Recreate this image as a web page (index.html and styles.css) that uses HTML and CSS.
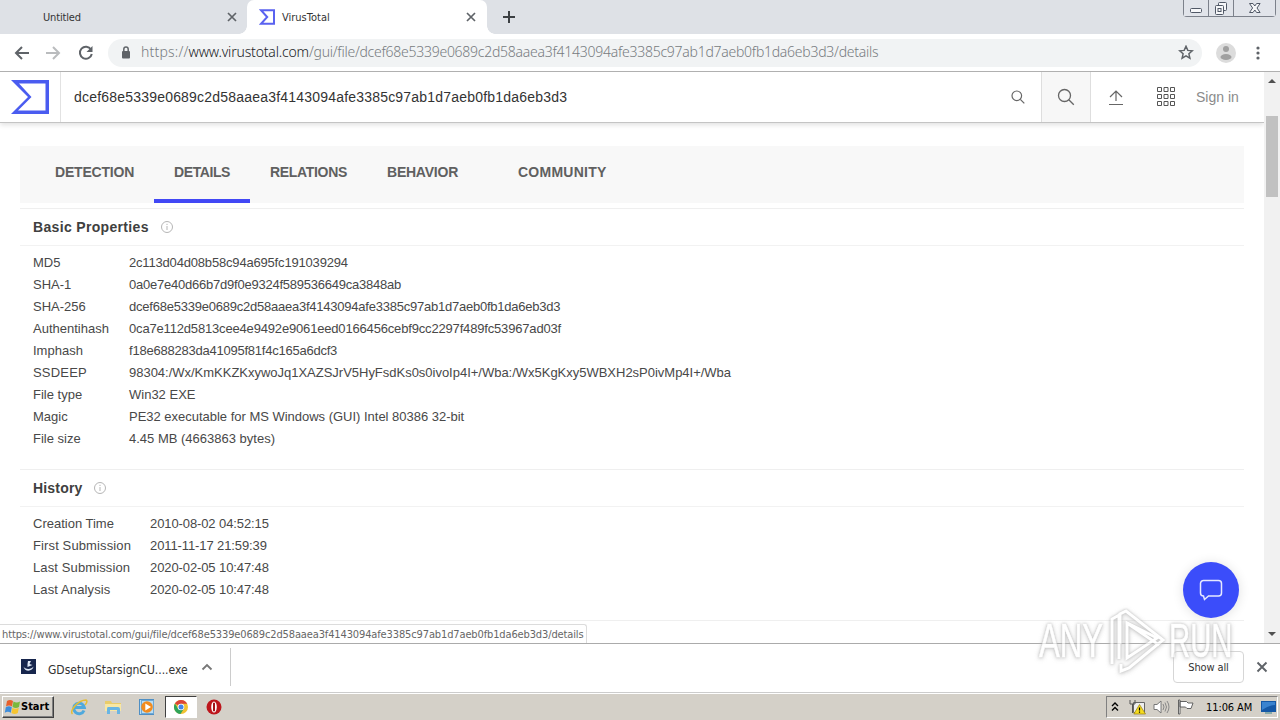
FILE: index.html
```
<!DOCTYPE html>
<html lang="en">
<head>
<meta charset="utf-8">
<title>VirusTotal</title>
<link rel="stylesheet" href="styles.css">
</head>
<body>
<div class="screen">
  <div class="tabstrip">
    <div class="tab tab-idle"><span class="tab-title t-untitled">Untitled</span><svg class="tab-x" width="10" height="10" viewBox="0 0 10 10"><path d="M1 1l8 8M9 1l-8 8"/></svg></div>
    <div class="tab tab-active"><svg class="favicon" width="16" height="16" viewBox="0 0 16 16"><path d="M2 1.200h13v13.600H2L8.200 8z"/></svg><span class="tab-title">VirusTotal</span><svg class="tab-x" width="10" height="10" viewBox="0 0 10 10"><path d="M1 1l8 8M9 1l-8 8"/></svg></div>
    <svg class="newtab" width="12" height="12" viewBox="0 0 12 12"><path d="M6 0v12M0 6h12"/></svg>
    <div class="winbtns">
      <div class="wb"><svg width="24" height="16" viewBox="0 0 24 16"><rect x="6.500" y="8.500" width="11" height="4" rx="1"/></svg></div>
      <div class="wb"><svg width="24" height="16" viewBox="0 0 24 16"><rect x="9.500" y="2.500" width="8" height="8" rx="1"/><rect x="6.500" y="5.500" width="8" height="9" rx="1"/><rect x="9" y="8.500" width="3" height="3"/></svg></div>
      <div class="wb"><svg width="41" height="16" viewBox="0 0 41 16"><path d="M15.500 3.500h3.500l1.800 2.500 1.800-2.500h3.500L23 8l3.100 4.500h-3.500L20.800 10 19 12.500h-3.500L18.600 8z"/></svg></div>
    </div>
  </div>

  <div class="toolbar">
    <svg class="nav" width="94" height="36" viewBox="0 0 94 36"><path class="dark" d="M29 18H16M22 12l-6 6 6 6"/><path class="pale" d="M46 18h13M53 12l6 6-6 6"/><path class="dark" d="M91 14.500a6 6 0 1 0 .8 4.500"/><path class="fill" d="M92.500 11v6h-6z"/></svg>
    <div class="omnibox">
      <svg class="lock" width="10" height="13" viewBox="0 0 10 13"><rect x="1" y="5" width="8" height="7.500" rx="1"/><path d="M2.800 5.500V3.300a2.200 2.200 0 0 1 4.400 0v2.200"/></svg>
      <div class="url"><span class="u1">https://</span><span class="u2">www.virustotal.com</span><span class="u3">/gui/file/dcef68e5339e0689c2d58aaea3f4143094afe3385c97ab1d7aeb0fb1da6eb3d3/details</span></div>
      <svg class="star" width="16" height="16" viewBox="0 0 16 16"><path d="M8 1.300l1.800 4.100 4.500.4-3.400 3 1 4.400L8 10.900l-3.900 2.300 1-4.400-3.400-3 4.500-.4z"/></svg>
    </div>
    <svg class="avatar" width="20" height="20" viewBox="0 0 20 20"><circle class="a1" cx="10" cy="10" r="10"/><circle class="a2" cx="10" cy="6" r="3"/><ellipse class="a2" cx="10" cy="14" rx="5.500" ry="3"/></svg>
    <svg class="kebab" width="4" height="14" viewBox="0 0 4 14"><circle cx="2" cy="2" r="1.600"/><circle cx="2" cy="7" r="1.600"/><circle cx="2" cy="12" r="1.600"/></svg>
  </div>

  <div class="viewport">
    <div class="page">
      <div class="vt-head">
        <div class="vt-logo"><svg width="40" height="36" viewBox="0 0 40 36"><path fill-rule="evenodd" d="M1 1h38v34H1l17-17zM9 4.500L21.500 18 8 31.500h27.500v-27z"/></svg></div>
        <div class="vt-query"><span class="q">dcef68e5339e0689c2d58aaea3f4143094afe3385c97ab1d7aeb0fb1da6eb3d3</span>
          <svg width="14" height="14" viewBox="0 0 14 14"><circle cx="5.800" cy="5.800" r="4.800"/><path d="M9.300 9.300L13.300 13.300"/></svg></div>
        <div class="vt-search"><svg width="18" height="18" viewBox="0 0 18 18"><circle cx="7.500" cy="7.500" r="6"/><path d="M11.800 11.800l5 5"/></svg></div>
        <svg class="vt-up" width="16" height="16" viewBox="0 0 16 16"><path d="M1 15.500h14M8 12V2M2 8l6-6 6 6"/></svg>
        <svg class="vt-apps" width="18" height="20" viewBox="0 0 18 20"><path d="M.5.500h4v4h-4zM7 .5h4v4H7zM13.500.5h4v4h-4zM.5 7.500h4v4h-4zM7 7.500h4v4H7zM13.500 7.500h4v4h-4zM.5 14.500h4v4h-4zM7 14.500h4v4H7zM13.500 14.500h4v4h-4z"/></svg>
        <span class="sign">Sign in</span>
      </div>
      <div class="content">
        <div class="tabs">
          <div class="t t1">DETECTION</div><div class="t t2">DETAILS</div><div class="t t3">RELATIONS</div><div class="t t4">BEHAVIOR</div><div class="t t5">COMMUNITY</div>
        </div>
        <div class="section">
          <div class="sec-head"><span class="h1">Basic Properties</span><svg class="info" width="12" height="12" viewBox="0 0 12 12"><circle cx="6" cy="6" r="5.500"/><path d="M6 5v4M6 2.800v1.200"/></svg></div>
          <div class="rows">
            <span>MD5</span><span class="v1">2c113d04d08b58c94a695fc191039294</span>
            <span>SHA-1</span><span class="hash">0a0e7e40d66b7d9f0e9324f589536649ca3848ab</span>
            <span>SHA-256</span><span class="hash">dcef68e5339e0689c2d58aaea3f4143094afe3385c97ab1d7aeb0fb1da6eb3d3</span>
            <span>Authentihash</span><span class="v4">0ca7e112d5813cee4e9492e9061eed0166456cebf9cc2297f489fc53967ad03f</span>
            <span>Imphash</span><span class="hash">f18e688283da41095f81f4c165a6dcf3</span>
            <span class="ssdeep">SSDEEP</span><span class="v6">98304:/Wx/KmKKZKxywoJq1XAZSJrV5HyFsdKs0s0ivoIp4I+/Wba:/Wx5KgKxy5WBXH2sP0ivMp4I+/Wba</span>
            <span>File type</span><span>Win32 EXE</span>
            <span>Magic</span><span class="v6">PE32 executable for MS Windows (GUI) Intel 80386 32-bit</span>
            <span>File size</span><span>4.45 MB (4663863 bytes)</span>
          </div>
        </div>
        <div class="section">
          <div class="sec-head"><span class="h2">History</span><svg class="info info-2" width="12" height="12" viewBox="0 0 12 12"><circle cx="6" cy="6" r="5.500"/><path d="M6 5v4M6 2.800v1.200"/></svg></div>
          <div class="rows hist">
            <span>Creation Time</span><span class="date">2010-08-02 04:52:15</span>
            <span class="wide">First Submission</span><span class="date">2011-11-17 21:59:39</span>
            <span class="wide">Last Submission</span><span class="date">2020-02-05 10:47:48</span>
            <span class="wide">Last Analysis</span><span class="date">2020-02-05 10:47:48</span>
          </div>
        </div>
        <div class="section-end"></div>
      </div>
      <div class="chat"><svg width="24" height="22" viewBox="0 0 24 22"><path d="M4.500 1.500h15a3 3 0 0 1 3 3v9.500a3 3 0 0 1-3 3H9.500L5.500 20.500 4.500 17a3 3 0 0 1-3-3V4.500a3 3 0 0 1 3-3z"/></svg></div>
      <div class="status">https://www.virustotal.com/gui/file/dcef68e5339e0689c2d58aaea3f4143094afe3385c97ab1d7aeb0fb1da6eb3d3/details</div>
    </div>
    <div class="scrollbar"><i class="up"></i><div class="thumb"></div><i class="down"></i></div>
  </div>

  <div class="downloads">
    <svg class="exe" width="15" height="15" viewBox="0 0 15 15"><rect width="15" height="15" fill="#17264d"/><path d="M7 2h3L8.500 5l3 1-5 2V5zM2.500 7.500c1 3 8 3.500 10 0-.5 5-9 6-10 0z" fill="#dfe8f5"/></svg>
    <span class="exe-name">GDsetupStarsignCU....exe</span>
    <svg class="caret" width="12" height="8" viewBox="0 0 12 8"><path d="M1.500 6.500L6 2l4.500 4.500"/></svg>
    <div class="dl-sep"></div>
    <div class="showall">Show all</div>
    <svg class="dl-x" width="12" height="12" viewBox="0 0 12 12"><path d="M1.500 1.500l9 9M10.500 1.500l-9 9"/></svg>
  </div>

  <div class="taskbar">
    <div class="start"><svg width="17" height="16" viewBox="0 0 17 16"><path fill="#e8602c" d="M3 2q3-2 6 0L8 7.500Q5 5.500 2 7.500z"/><path fill="#7ab83c" d="M9.500 2.500q3 2 6.500 0L15 8q-3 2-6.500 0z"/><path fill="#3e8ddb" d="M1.800 8.200Q5 6.200 7.800 8.200l-1 5.500q-3-2-6 0z"/><path fill="#f6c531" d="M8.400 8.700q3 2 6.400 0l-1 5.300q-3 2-6.400 0z"/></svg>Start</div>
    <svg class="ico" width="18" height="18" viewBox="0 0 18 18"><path d="M14 12.500A5.300 5.300 0 1 1 14.300 9.500H5" fill="none" stroke="#4fa9dd" stroke-width="3"/><path d="M2.500 16C-1 13 8 2 16 2c2 1 0 4-1 5" fill="none" stroke="#e5bd35" stroke-width="1.500"/></svg>
    <svg class="ico" width="18" height="18" viewBox="0 0 18 18"><path fill="#e9cc6b" d="M1 3h6l1 2h9v8H1z"/><path fill="#f8e7a3" d="M1 6h16v7H1z"/><path fill="#69b5e3" d="M4 9h10q2 0 2 2v5h-3v-4H6v4H3v-5q0-2 1-2z"/></svg>
    <svg class="ico" width="18" height="18" viewBox="0 0 18 18"><rect x="1.500" y="1.500" width="14" height="15" fill="#b9ddf4" stroke="#4f8fc4"/><rect x="3.500" y="2.500" width="12" height="13" fill="none" stroke="#6ba8d6"/><circle cx="9" cy="9" r="5.800" fill="#f18b1e"/><path d="M7.300 5.500v7L13 9z" fill="#fff"/></svg>
    <div class="chrome"><svg width="16" height="16" viewBox="0 0 16 16"><circle cx="8" cy="8" r="7" fill="#f1c232"/><path d="M8 8L1.900 4.500A7 7 0 0 1 14.200 4.700H8z" fill="#dc4437"/><path d="M1.900 4.500A7 7 0 0 0 7.500 15L11 9.500 8 8 5 9.500z" fill="#2fa45a"/><circle cx="8" cy="8" r="3.300" fill="#fff"/><circle cx="8" cy="8" r="2.500" fill="#4285e8"/></svg></div>
    <svg class="ico opera" width="16" height="16" viewBox="0 0 16 16"><circle cx="8" cy="8" r="7.500" fill="#bd161c"/><ellipse cx="8" cy="8" rx="2.800" ry="5.500" fill="#fff"/><path d="M8 3.800v8.400" stroke="#a41318" stroke-width="2"/></svg>
    <div class="tray">
      <svg class="chev" width="8" height="10" viewBox="0 0 8 10"><path d="M1 4l3-3 3 3M1 8.500l3-3 3 3"/></svg>
      <svg class="net" width="17" height="16" viewBox="0 0 17 16"><path d="M4.500 3.500h11v10h-11z" fill="#eee" stroke="#666"/><path d="M1 1v4h5V1M3.500 5v9" fill="none" stroke="#555"/><path d="M10.500 5.500L16.500 15H4.800z" fill="#f6dc1e" stroke="#957d13" stroke-width=".7"/><path d="M10.500 8.500v3M10.500 12.500v1.200" stroke="#000" stroke-width="1.200"/></svg>
      <svg class="vol" width="17" height="16" viewBox="0 0 17 16"><path d="M1 5.500h3L8 2v12L4 10.500H1z" fill="#fff" stroke="#777"/><path d="M10 5q2 3 0 6M12 3.500q3 4.500 0 9M14 2q4 6 0 12" fill="none" stroke="#888"/></svg>
      <svg class="flag" width="17" height="16" viewBox="0 0 17 16"><path d="M1.500 1v14h1.500V1zM3 2.500h6.500L11 4h5l-2 5.500h-4L8.500 8H3z" fill="#fff" stroke="#555" stroke-width=".9"/></svg>
      <span class="clock">11:06 AM</span>
      <svg class="desk" width="15" height="13" viewBox="0 0 15 13"><rect width="15" height="11" fill="#1558a6"/><path d="M1 1h13v3Q8 4 1 9z" fill="#3a83cf"/><rect x="4" y="11" width="7" height="2" fill="#8aa"/></svg>
    </div>
  </div>

  <div class="watermark"><span class="wm wm-a">ANY</span><svg width="60" height="66" viewBox="0 0 60 66"><path d="M4 56V11l7-4v44M12 36V6l6-3 37 29-34 28-8 3v-7"/><path d="M19 15v35l30-20zM19 15l32 22"/></svg><span class="wm wm-r">RUN</span></div>
</div>
</body>
</html>
```
FILE: styles.css
```
* { box-sizing: border-box; }
body { margin: 0; font-family: "Liberation Sans", Arial, sans-serif; }
svg { display: block; flex: none; fill: none; }
span { white-space: nowrap; }
.screen { position: relative; width: 1280px; height: 720px; overflow: hidden; background: #fff; display: flex; flex-direction: column; }

.tabstrip { height: 34px; flex: none; display: flex; background: #dee1e6; font: 11px/14px "DejaVu Sans Condensed", "Noto Sans", sans-serif; color: #333; }
.tab { display: flex; align-items: center; height: 34px; }
.tab-idle { width: 247px; padding: 0 10px 0 43px; }
.tab-active { width: 240px; padding: 0 11px 0 12px; background: #fff; border-radius: 7px 7px 0 0; position: relative; }
.tab-active::before, .tab-active::after { content: ""; position: absolute; bottom: 0; width: 8px; height: 8px; }
.tab-active::before { left: -8px; background: radial-gradient(circle at 0 0, transparent 7.5px, #fff 8px); }
.tab-active::after { right: -8px; background: radial-gradient(circle at 100% 0, transparent 7.5px, #fff 8px); }
.tab-title { flex: 1; padding-top: 1px; }
.t-untitled { letter-spacing: -.15px; }
.favicon { margin-right: 7px; stroke: #5a62f0; stroke-width: 2; }
.tab-x { stroke: #5f6368; stroke-width: 1.700; }
.newtab { margin: 11px 0 0 16px; stroke: #3c4043; stroke-width: 2; }
.winbtns { display: flex; margin-left: auto; margin-right: 4px; height: 17px; border: 1px solid #7c818b; border-top: 0; border-radius: 0 0 4px 4px; }
.wb { stroke: #505866; height: 16px; background: #e1e4ea; }
.wb svg { fill: #f6f7f9; }
.wb + .wb { border-left: 1px solid #7c818b; }

.toolbar { height: 38px; flex: none; display: flex; align-items: center; border-bottom: 1px solid #b0b0b0; }
.nav { stroke-width: 2; }
.dark { stroke: #5f6368; }
.pale { stroke: #babcbe; }
.fill { fill: #5f6368; }
.omnibox { width: 1094px; height: 28px; margin-left: 14px; padding: 0 8px 0 13px; border-radius: 14px; background: #f1f3f4; display: flex; align-items: center; }
.lock { stroke: #5f6368; stroke-width: 1.500; }
.lock rect { fill: #5f6368; stroke: none; }
.url { margin-left: 10px; flex: 1; height: 22px; font: 300 14px/20px "Noto Sans", sans-serif; color: #777b80; }
.u1 { letter-spacing: .2px; }
.u2 { color: #202124; letter-spacing: -.17px; }
.u3 { letter-spacing: -.26px; }
.star { stroke: #5f6368; stroke-width: 1.500; }
.avatar { margin-left: 14px; }
.a1 { fill: #dcdcdc; }
.a2 { fill: #a0a0a0; }
.kebab { margin-left: 20px; fill: #5f6368; }

.viewport { height: 571px; flex: none; display: flex; }
.page { width: 1264px; position: relative; overflow: hidden; }
.vt-head { height: 51px; display: flex; align-items: center; border-bottom: 1px solid #c4c4c4; box-shadow: 0 2px 5px rgba(0,0,0,.12); background: #fff; }
.vt-logo { width: 61px; height: 50px; padding: 7px 0 0 10px; border-right: 1px solid #e2e2e2; }
.vt-logo path { fill: #4a5cf0; }
.vt-query { width: 980px; display: flex; align-items: center; justify-content: space-between; padding: 0 16px 0 13px; font-size: 14px; color: #333; }
.q { letter-spacing: .2px; }
.vt-query svg { stroke: #666; stroke-width: 1.200; }
.vt-search { width: 50px; height: 50px; display: flex; align-items: center; justify-content: center; background: #f7f7f7; border: 1px solid #dedede; border-width: 0 1px; stroke: #666; stroke-width: 1.300; }
.vt-up { margin-left: 17px; stroke: #666; stroke-width: 1.200; }
.vt-apps { margin-left: 33px; stroke: #555; stroke-width: 1; }
.sign { margin-left: 21px; font-size: 14px; color: #8b8b8b; }

.content { padding: 23px 20px 0; }
.tabs { height: 57px; display: flex; background: #f8f8f8; font-weight: bold; font-size: 14px; line-height: 16px; color: #606060; margin-bottom: 5px; }
.t { padding-top: 18px; height: 57px; white-space: nowrap; }
.t1 { margin-left: 35px; width: 99px; letter-spacing: -.2px; }
.t2 { width: 96px; padding-left: 20px; border-bottom: 4px solid #4248f5; letter-spacing: -.4px; }
.t3 { margin-left: 20px; width: 117px; letter-spacing: -.32px; }
.t4 { width: 131px; letter-spacing: -.23px; }
.t5 { letter-spacing: .25px; }
.section { border-top: 1px solid #efefef; }
.sec-head { height: 37px; display: flex; align-items: center; padding-left: 13px; border-bottom: 1px solid #f2f2f2; font-weight: bold; font-size: 14px; color: #404040; }
.h1 { letter-spacing: .33px; }
.h2 { letter-spacing: .18px; }
.info { margin-left: 12px; stroke: #b5b5b5; }
.info-2 { margin-left: 11px; }
.rows { display: grid; grid-template-columns: 96px 1fr; grid-auto-rows: 22px; line-height: 22px; padding: 6px 0 19px 13px; font-size: 13px; color: #484848; }
.hist { grid-template-columns: 117px 1fr; padding-bottom: 19px; }
.v1 { letter-spacing: -.18px; }
.hash { letter-spacing: -.23px; }
.v4 { letter-spacing: -.17px; }
.v6 { letter-spacing: -.015px; }
.ssdeep { letter-spacing: .2px; }
.date { letter-spacing: -.1px; }
.wide { letter-spacing: .12px; }
.section-end { border-top: 1px solid #efefef; }
.chat { position: absolute; left: 1183px; top: 490px; width: 56px; height: 56px; border-radius: 50%; background: #3b4dfa; display: flex; align-items: center; justify-content: center; box-shadow: 0 1px 12px rgba(0,0,0,.12); stroke: #e6e9ff; stroke-width: 1.500; }
.status { position: absolute; left: 0; bottom: 0; width: 587px; height: 19px; padding-left: 2px; background: #fff; border: 1px solid #dcdcdc; border-left: 0; border-bottom: 0; border-radius: 0 3px 0 0; font: 11px/20px "DejaVu Sans Condensed", sans-serif; letter-spacing: -.13px; color: #666; white-space: nowrap; overflow: hidden; }
.scrollbar { width: 16px; background: #f1f1f1; display: flex; flex-direction: column; align-items: center; }
.up, .down { border: 4px solid transparent; }
.up { border-bottom-color: #505050; border-top: 0; margin-top: 7px; }
.down { border-top-color: #505050; border-bottom: 0; margin: auto 0 7px; }
.thumb { width: 12px; height: 81px; margin-top: 33px; background: #c1c1c1; }

.downloads { height: 50px; flex: none; display: flex; align-items: center; border-top: 1px solid #ababab; border-bottom: 1px solid #ccc; padding: 0 12px 2px 21px; font: 12px/16px "DejaVu Sans Condensed", sans-serif; color: #333; }
.exe { margin-top: -1px; }
.exe-name { margin-left: 12px; width: 140px; padding-top: 6px; }
.caret { margin-left: 13px; stroke: #777; stroke-width: 1.800; }
.dl-sep { width: 1px; height: 38px; margin-left: 17px; background: #ccc; }
.showall { margin-left: auto; width: 71px; height: 32px; padding-top: 1px; border: 1px solid #d6d6d6; border-radius: 4px; display: flex; align-items: center; justify-content: center; font-size: 11px; letter-spacing: -.12px; }
.dl-x { margin-left: 12px; stroke: #5f6368; stroke-width: 1.900; }

.taskbar { height: 27px; flex: none; display: flex; align-items: center; background: #d4d0c8; border-top: 1px solid #fff; color: #000; }
.start { width: 52px; height: 22px; margin-left: 2px; padding-left: 1px; display: flex; align-items: center; border: 1px solid; border-color: #fff #404040 #404040 #fff; box-shadow: inset -1px -1px #808080; font: bold 11px/14px "DejaVu Sans Condensed", sans-serif; }
.ico { margin-left: 16px; }
.chrome { width: 32px; height: 22px; margin-left: 9px; background: #fff; border: 1px solid; border-color: #404040 #fff #fff #404040; display: flex; align-items: center; justify-content: center; }
.opera { margin-left: 9px; }
.tray { width: 172px; height: 22px; margin: 0 2px 0 auto; border: 1px solid; border-color: #808080 #fff #fff #808080; display: flex; align-items: center; font: 11px/14px "DejaVu Sans Condensed", sans-serif; }
.chev { margin-left: 4px; stroke: #000; stroke-width: 1.400; }
.net { margin-left: 10px; }
.vol { margin-left: 7px; }
.flag { margin-left: 7px; }
.clock { margin-left: 12px; width: 48px; padding-top: 1px; letter-spacing: -.1px; }
.desk { margin-left: 7px; }

.watermark { position: absolute; left: 1039px; top: 608px; height: 66px; display: flex; align-items: center; opacity: .7; filter: drop-shadow(0 0 1px #aaa) drop-shadow(0 1px 2px #bbb); }
.watermark svg { margin-left: 5px; stroke: #fff; stroke-width: 3; }
.wm { font: 48px/60px "Liberation Sans", sans-serif; color: #fff; -webkit-text-stroke: .6px #fff; transform-origin: 0 50%; }
.wm-a { width: 64px; transform: scaleX(.65); }
.wm-r { width: 64px; margin-left: 1px; transform: scaleX(.61); }
```
